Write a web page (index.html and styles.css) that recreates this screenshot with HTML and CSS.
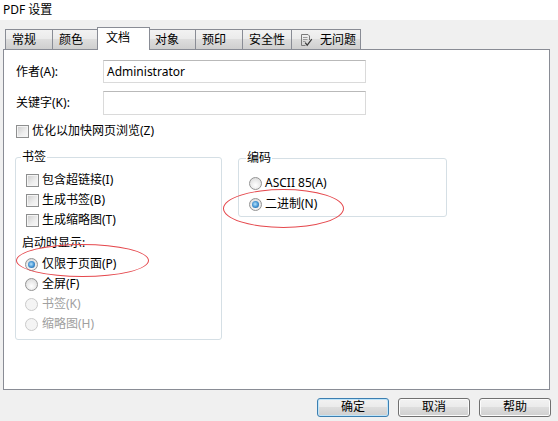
FILE: index.html
```html
<!DOCTYPE html>
<html lang="zh-CN">
<head>
<meta charset="utf-8">
<title>PDF 设置</title>
<link rel="stylesheet" href="styles.css">
</head>
<body>
<div class="window">
  <div class="titlebar">PDF 设置</div>
  <div class="tabs">
    <div class="tab">常规</div>
    <div class="tab">颜色</div>
    <div class="tab active">文档</div>
    <div class="tab">对象</div>
    <div class="tab">预印</div>
    <div class="tab">安全性</div>
    <div class="tab tab-icon">
      <svg class="doc-icon" width="13" height="13" viewBox="0 0 13 13">
        <path d="M1.5 0.5h6.5l1.5 1.5v4M1.5 0.5v11h4" fill="none" stroke="#7a7a7a" stroke-width="1"/>
        <path d="M3 3.5h4.5M3 5.5h4.5M3 7.5h2.5" fill="none" stroke="#9a9a9a" stroke-width="1"/>
        <path d="M5.2 8.6l2 2.6 4.6-6" fill="none" stroke="#3a3a3a" stroke-width="1.2"/>
      </svg>
      无问题
    </div>
  </div>
  <div class="panel">
    <div class="field">
      <span class="field-label">作者(A):</span>
      <div class="input">Administrator</div>
    </div>
    <div class="field field-2">
      <span class="field-label">关键字(K):</span>
      <div class="input"></div>
    </div>
    <div class="opt top-check"><span class="cb"></span>优化以加快网页浏览(Z)</div>
    <div class="groups">
      <fieldset class="group group-bookmarks">
        <legend>书签</legend>
        <div class="opt"><span class="cb"></span>包含超链接(I)</div>
        <div class="opt"><span class="cb"></span>生成书签(B)</div>
        <div class="opt"><span class="cb"></span>生成缩略图(T)</div>
        <div class="sub-label">启动时显示:</div>
        <div class="opt"><span class="rb checked"></span>仅限于页面(P)</div>
        <div class="opt"><span class="rb"></span>全屏(F)</div>
        <div class="opt disabled"><span class="rb"></span>书签(K)</div>
        <div class="opt disabled"><span class="rb"></span>缩略图(H)</div>
      </fieldset>
      <fieldset class="group group-encoding">
        <legend>编码</legend>
        <div class="opt"><span class="rb"></span>ASCII 85(A)</div>
        <div class="opt"><span class="rb checked"></span>二进制(N)</div>
      </fieldset>
    </div>
    <div class="mark mark-1"></div>
    <div class="mark mark-2"></div>
  </div>
  <div class="buttons">
    <div class="btn default">确定</div>
    <div class="btn">取消</div>
    <div class="btn">帮助</div>
  </div>
</div>
</body>
</html>
```
FILE: styles.css
```css
* { box-sizing: border-box; }
html, body { margin: 0; padding: 0; }
body {
  width: 558px;
  height: 421px;
  background: #f0f0f0;
  font-family: "Noto Sans", "Noto Sans CJK SC", sans-serif;
  font-size: 12px;
  line-height: 16px;
  color: #000;
  overflow: hidden;
}
.window { width: 558px; height: 421px; }
.titlebar {
  height: 20px;
  background: #ffffff;
  padding: 2px 0 0 3px;
}
.tabs {
  display: flex;
  align-items: flex-end;
  margin-top: 7px;
  padding-left: 5px;
  position: relative;
  z-index: 2;
}
.tab {
  height: 20px;
  min-width: 48px;
  padding: 2px 6px 0 6px;
  border: 1px solid #898c95;
  border-bottom: none;
  margin-right: -1px;
  background: linear-gradient(#f2f2f2, #ebebeb 45%, #dddddd 50%, #cfcfcf);
  white-space: nowrap;
}
.tab.active {
  height: 23px;
  margin: 0 -2px -1px -2px;
  padding: 2px 8px 0 8px;
  background: #ffffff;
  min-width: 53px;
  position: relative;
  z-index: 3;
}
.tab.active + .tab { margin-left: 0; }
.tab-icon {
  display: flex;
  align-items: center;
  gap: 7px;
  padding-top: 0;
  padding-left: 8px;
  padding-right: 4px;
}
.doc-icon { flex: none; margin-top: 1px; }
.panel {
  position: relative;
  z-index: 1;
  margin-left: 3px;
  width: 547px;
  height: 341px;
  border: 1px solid #898c95;
  background: #ffffff;
  padding: 10px 0 0 12px;
}
.field {
  display: flex;
  align-items: center;
  height: 23px;
}
.field-2 { margin-top: 8px; height: 24px; }
.field-label { width: 87px; }
.input {
  width: 263px;
  height: 100%;
  border: 1px solid #dadada;
  border-top-color: #b9b9b9;
  padding: 3px 0 0 3px;
  background: #fff;
}
.opt {
  display: flex;
  align-items: center;
  gap: 3px;
  height: 20px;
  white-space: nowrap;
}
.top-check { margin-top: 6px; }
.cb {
  width: 13px;
  height: 13px;
  flex: none;
  border: 1px solid #8e8f8f;
  background: linear-gradient(135deg, #cbcbcb, #eeeeee 60%, #f8f8f8);
  box-shadow: inset 0 0 0 1px #f4f4f4;
}
.rb {
  width: 13px;
  height: 13px;
  flex: none;
  border-radius: 50%;
  border: 1px solid #939393;
  background: radial-gradient(circle at 50% 65%, #ffffff, #e2e2e2 70%, #cfcfcf);
  position: relative;
}
.rb.checked::after {
  content: "";
  position: absolute;
  left: 2px;
  top: 2px;
  width: 7px;
  height: 7px;
  border-radius: 50%;
  background: radial-gradient(circle at 45% 45%, #b6e3fb, #3e8fd0 55%, #184f86);
}
.opt.disabled { color: #a0a0a0; }
.opt.disabled .rb {
  border-color: #cacaca;
  background: #f4f4f4;
}
.groups {
  display: flex;
  align-items: flex-start;
  gap: 16px;
  margin-top: 8px;
  padding-left: -1px;
  margin-left: -1px;
}
.group {
  margin: 0;
  border: 1px solid #d5dfe5;
  border-radius: 3px;
  min-width: 0;
}
.group legend {
  padding: 0 1px;
  line-height: 16px;
}
.group-bookmarks {
  width: 207px;
  padding: 5px 10px 5px 10px;
}
.group-bookmarks legend { margin-left: -5px; }
.group-encoding {
  width: 209px;
  padding: 7px 10px 2px 10px;
  margin-top: 1px;
}
.group-encoding legend { margin-left: -3px; }
.sub-label {
  height: 20px;
  margin: 3px 0 1px -4px;
  display: flex;
  align-items: center;
}
.group-bookmarks .rb { margin-left: -1px; margin-right: 1px; }
.group-encoding .opt + .opt { margin-top: 1px; }
.mark {
  position: absolute;
  border: 1px solid #e5484d;
  border-radius: 50%;
  pointer-events: none;
}
.mark-1 { left: 12px; top: 194px; width: 133px; height: 33px; }
.mark-2 { left: 219px; top: 139px; width: 121px; height: 39px; }
.buttons {
  display: flex;
  justify-content: flex-end;
  gap: 9px;
  margin-top: 8px;
  padding-right: 7px;
}
.btn {
  width: 72px;
  height: 19px;
  border: 1px solid #707070;
  border-radius: 3px;
  background: linear-gradient(#f2f2f2, #ebebeb 45%, #dddddd 50%, #cfcfcf);
  box-shadow: inset 0 0 0 1px #fcfcfc;
  text-align: center;
  line-height: 16px;
}
.btn.default {
  border-color: #3c7fb1;
  box-shadow: inset 0 0 0 1px #bfe5fa;
}
```
